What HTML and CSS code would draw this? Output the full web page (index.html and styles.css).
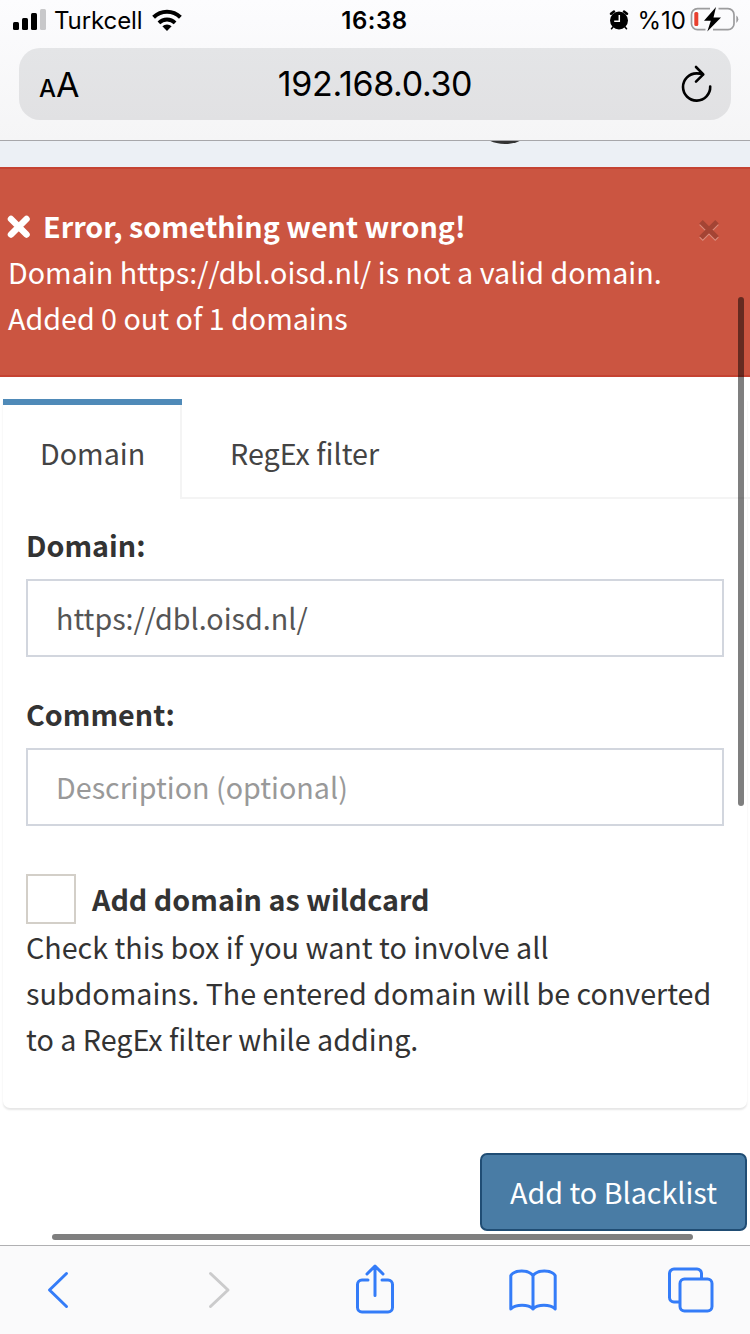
FILE: index.html
```html
<!DOCTYPE html>
<html lang="en" dir="ltr">
  <head>
    <meta charset="utf-8">
    <title>192.168.0.30</title>
    <link rel="stylesheet" href="styles.css">
  </head>

  <body>

    <header class="browser_top">
      <div class="status">
        <div class="status_left">
          <svg class="signal" width="34" height="22" viewBox="0 0 34 22">
            <rect x="0" y="13" width="6" height="8" rx="1.5"/>
            <rect x="9" y="9" width="6" height="12" rx="1.5"/>
            <rect x="18" y="4" width="6" height="17" rx="1.5"/>
            <rect x="27" y="0" width="6" height="21" rx="1.5" fill="#c8c8ca"/>
          </svg>
          <span class="carrier">Turkcell</span>
          <svg class="wifi" width="30" height="22" viewBox="0 0 30 22">
            <path d="M1.6 8.2a19.2 19.2 0 0 1 26.8 0" fill="none" stroke="#000" stroke-width="4"/>
            <path d="M6.9 13.8a11.6 11.6 0 0 1 16.2 0" fill="none" stroke="#000" stroke-width="3.8"/>
            <path d="M15 22l-4.600-4.700a6.500 6.500 0 0 1 9.200 0z"/>
          </svg>
        </div>
        <span class="clock">16:38</span>
        <div class="status_right">
          <svg class="alarm" width="20" height="20" viewBox="0 0 20 20">
            <circle cx="10" cy="10.500" r="9"/>
            <path d="M2 3.800L5 1.500M18 3.800L15 1.500" stroke="#000" stroke-width="2.400" stroke-linecap="round"/>
            <path d="M4 17l-1.500 1.700M16 17l1.500 1.700" stroke="#000" stroke-width="1.600" stroke-linecap="round"/>
            <path d="M10.300 5v6.200H5.200" fill="none" stroke="#fff" stroke-width="1.500"/>
          </svg>
          <span class="percent">%10</span>
          <svg class="battery" width="50" height="25" viewBox="0 0 50 25">
            <path d="M20 1.700H7.500a6 6 0 0 0-6 6v9a6 6 0 0 0 6 6H15.500M28.500 1.700H38a6 6 0 0 1 6 6v9a6 6 0 0 1-6 6H23" fill="none" stroke="#9c9c9e" stroke-width="1.700"/>
            <path d="M46.300 8.500a4.500 4.500 0 0 1 0 7.500z" fill="#9c9c9e"/>
            <rect x="4.300" y="5" width="4" height="14" rx="1.500" fill="#e8402f"/>
            <path d="M26 0L14 13.700h6.800L17.300 24.500 31 10.400h-7.500z"/>
          </svg>
        </div>
      </div>

      <div class="urlbar">
        <span class="text_size"><span class="small_a">A</span>A</span>
        <span class="address">192.168.0.30</span>
        <svg class="reload" width="32" height="38" viewBox="0 0 32 38">
          <path d="M29.200 21.500A13.600 13.600 0 1 1 15.700 8.400c2.800 0 4.800.300 6.500 1M15 2l7.300 7.400L15 16.700" fill="none" stroke="#000" stroke-width="2.600" stroke-linecap="round" stroke-linejoin="round"/>
        </svg>
      </div>
    </header>

    <main class="page">
      <div class="heading_strip"><div class="heading_tail"></div></div>

      <div class="alert">
        <div class="alert_text">
          <h4>
            <svg width="24" height="24" viewBox="0 0 24 24"><path d="M4 4l15.500 15.500M19.500 4L4 19.500" stroke="#fff" stroke-width="6.500" stroke-linecap="round"/></svg>
            <span>Error, something went wrong!</span>
          </h4>
          <p>Domain https://dbl.oisd.nl/ is not a valid domain.</p>
          <p>Added 0 out of 1 domains</p>
        </div>
        <svg class="close" width="24" height="25" viewBox="0 0 24 25">
          <path d="M4 5.200l16 16M20 5.200l-16 16" stroke="#db8c7d" stroke-width="5"/>
          <path d="M4 3.800l16 16M20 3.800l-16 16" stroke="#a44434" stroke-width="5"/>
        </svg>
      </div>

      <div class="tab_box">
        <div class="tabs">
          <a class="tab active">Domain</a>
          <a class="tab">RegEx filter</a>
        </div>

        <form class="tab_content">
          <label for="domain">Domain:</label>
          <input id="domain" type="text" value="https://dbl.oisd.nl/">
          <label for="comment">Comment:</label>
          <input id="comment" type="text" placeholder="Description (optional)">

          <div class="wildcard">
            <span class="checkbox"></span>
            <b>Add domain as wildcard</b>
          </div>
          <p class="help">Check this box if you want to involve all<br>subdomains. The entered domain will be converted<br>to a RegEx filter while adding.</p>
        </form>
      </div>

      <div class="footer">
        <button class="button" type="button">Add to Blacklist</button>
      </div>

      <div class="scroll_v"></div>
      <div class="scroll_h"></div>
    </main>

    <nav class="toolbar">
      <svg width="24" height="40" viewBox="0 0 24 40"><path d="M20.500 3.500L3.500 20l17 16.500"/></svg>
      <svg class="off" width="24" height="40" viewBox="0 0 24 40"><path d="M3.500 3.500L21 20 3.500 36.500"/></svg>
      <svg class="share" width="40" height="50" viewBox="0 0 40 50">
        <path d="M13 16H7a4.500 4.500 0 0 0-4.500 4.500v23A4.500 4.500 0 0 0 7 48h26a4.500 4.500 0 0 0 4.500-4.500v-23A4.500 4.500 0 0 0 33 16h-6"/>
        <path d="M20 31.500V2.500M12 10l8-8 8 8"/>
      </svg>
      <svg class="book" width="50" height="44" viewBox="0 0 50 44">
        <path d="M25 6.500C20.500.800 7 .500 2.800 6.500V40c5.200-5 17.500-5 22.200 0 4.700-5 17-5 22.200 0V6.500C43 .500 29.500.800 25 6.500zV40"/>
      </svg>
      <svg width="46" height="46" viewBox="0 0 46 46">
        <path d="M33.500 11V6.500a4.500 4.500 0 0 0-4.500-4.500H6A4.500 4.500 0 0 0 1.500 6.500v24A4.500 4.500 0 0 0 6 35h5.500"/>
        <rect x="12" y="12" width="32" height="32" rx="4.500"/>
      </svg>
    </nav>

  </body>
</html>
```
FILE: styles.css
```css
* {
  box-sizing: border-box;
}

body {
  margin: 0;
  width: 750px;
  height: 1334px;
  overflow: hidden;
  display: flex;
  flex-direction: column;
  background: #fff;
  color: #333;
  font-family: "Noto Sans CJK SC", "Noto Sans", sans-serif;
  font-size: 28.7px;
  line-height: 46px;
}

h4, p {
  margin: 0;
  font-size: inherit;
}

svg {
  display: block;
  flex: none;
}

/* status bar and address */

.browser_top {
  height: 141px;
  flex: none;
  background: linear-gradient(#fcfcfe, #f5f5f6);
  border-bottom: 1px solid #a7a7aa;
  color: #000;
  font-family: Inter, "Liberation Sans", sans-serif;
}

.status {
  display: grid;
  grid-template-columns: 1fr 80px 1fr;
  height: 48px;
  padding: 0 10px 0 13px;
  font-size: 24px;
  line-height: 41px;
  white-space: nowrap;
}

.status_left,
.status_right {
  display: flex;
}

.status_right {
  justify-content: flex-end;
}

.signal {
  margin: 9px 7px 0 0;
}

.carrier {
  letter-spacing: -0.1px;
}

.wifi {
  margin: 9px 0 0 9px;
}

.clock {
  margin-left: -4px;
  text-align: center;
  font-weight: 600;
  letter-spacing: 0.5px;
}

.alarm {
  margin: 10px 9px 0 0;
}

.battery {
  margin: 7px 0 0 4px;
}

.urlbar {
  display: flex;
  justify-content: space-between;
  align-items: center;
  height: 72px;
  margin: 0 19px;
  padding: 0 18px 0 20px;
  border-radius: 21px;
  background: linear-gradient(#e4e5e7, #e1e1e3);
  font-size: 34px;
}

.text_size {
  width: 40px;
  padding-top: 5px;
  white-space: nowrap;
}

.small_a {
  font-size: 24px;
  font-weight: 500;
}

.address {
  margin-left: -2px;
  letter-spacing: -0.35px;
}

.reload {
  margin-left: 8px;
}

/* page */

.page {
  position: relative;
  height: 1104px;
  flex: none;
  overflow: hidden;
}

.heading_strip {
  height: 26px;
  overflow: hidden;
  background: #ecf0f5;
}

.heading_tail {
  width: 44px;
  height: 24px;
  margin: -21px 0 0 483px;
  border-radius: 50%;
  background: #333;
}

.alert {
  display: flex;
  justify-content: space-between;
  height: 210px;
  padding: 34px 29px 0 8px;
  border: solid #c54332;
  border-width: 2px 0;
  background: #cb5541;
  color: #fff;
}

.alert h4 {
  display: flex;
  align-items: center;
  gap: 12px;
}

.alert h4 svg {
  margin: 2px 0 0 -1px;
}

.close {
  margin-top: 15px;
}

.tab_box {
  width: 744px;
  height: 709px;
  margin: 22px 0 0 3px;
  border-radius: 0 0 7px 7px;
  box-shadow: 0 2px 2px rgba(0, 0, 0, 0.1);
}

.tabs {
  display: flex;
  height: 100px;
  margin-right: -3px;
  color: #444;
}

.tab {
  flex: 1;
  padding: 31px 0 0 48px;
  border-bottom: 2px solid #f4f4f4;
}

.tab.active {
  flex: none;
  width: 179px;
  padding: 25px 0 0 37px;
  border-top: 6px solid #4f8ab8;
  border-bottom: 0;
  box-shadow: inset -2px 0 #f4f4f4;
}

.tab_content {
  display: flex;
  flex-direction: column;
  padding: 23px 23px 0;
}

label {
  height: 46px;
  margin-bottom: 11px;
  font-weight: bold;
}

input {
  width: 698px;
  height: 78px;
  margin: 0 0 34px;
  padding: 0 28px 2px;
  border: 2px solid #d2d6de;
  border-radius: 0;
  background: #fff;
  color: #555;
  font: inherit;
}

input::placeholder {
  color: #999;
}

.wildcard {
  display: flex;
  align-items: center;
  gap: 16px;
  height: 50px;
  margin-top: 14px;
}

.checkbox {
  width: 50px;
  height: 50px;
  border: 2px solid #d3cfc8;
}

.help {
  white-space: nowrap;
}

.footer {
  display: flex;
  justify-content: flex-end;
  padding: 45px 3px 0;
}

.button {
  width: 267px;
  height: 78px;
  padding: 0;
  border: 2px solid #204d74;
  border-radius: 7px;
  background: #497ca5;
  color: #fff;
  font: inherit;
}

/* scroll indicators lie over the page */

.scroll_v,
.scroll_h {
  position: absolute;
  border-radius: 3px;
  background: rgba(0, 0, 0, 0.5);
}

.scroll_v {
  top: 156px;
  right: 6px;
  width: 6px;
  height: 509px;
}

.scroll_h {
  left: 52px;
  bottom: 5px;
  width: 641px;
  height: 6px;
}

/* bottom bar */

.toolbar {
  display: grid;
  grid-template-columns: 161px 148px 153px 160px 46px;
  align-items: center;
  height: 89px;
  flex: none;
  padding-left: 46px;
  border-top: 1px solid #b0b0b2;
  background: #fafafb;
}

.toolbar path,
.toolbar rect {
  fill: none;
  stroke: #347cf8;
  stroke-width: 3;
  stroke-linecap: round;
  stroke-linejoin: round;
}

.toolbar .off path {
  stroke: #cbcbcc;
}

.toolbar .share {
  margin-top: -3px;
}

.toolbar .book {
  margin-top: 2px;
}
```
